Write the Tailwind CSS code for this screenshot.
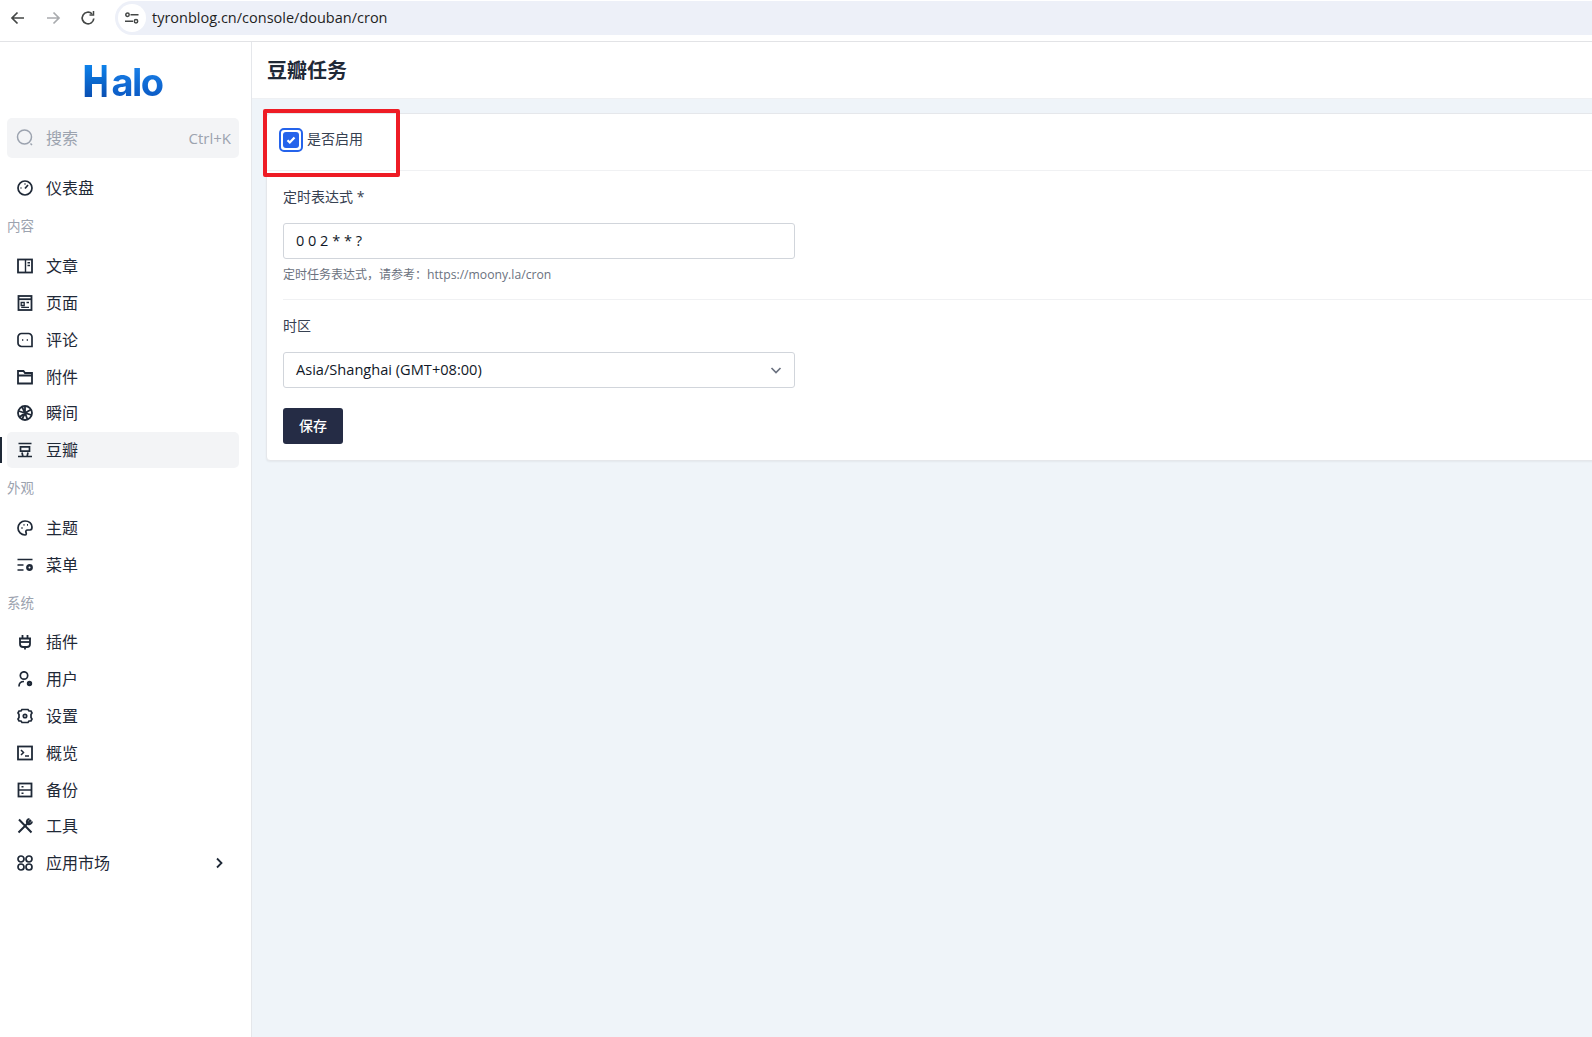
<!DOCTYPE html>
<html lang="zh-CN">
<head>
    <meta charset="UTF-8">
    <title>豆瓣任务</title>
    <script src="https://cdn.jsdelivr.net/npm/@tailwindcss/browser@4"></script>
</head>
<body class="h-[1037px] w-[1592px] overflow-hidden bg-white text-[#1f2937] font-['Open_Sans','Noto_Sans_CJK_SC',sans-serif]">
    <!-- Browser bar -->
    <div class="flex h-[42px] items-start border-b border-[#e2e3e6] bg-white pt-[1px]">
        <div class="flex h-[34px] w-[115px] shrink-0 items-center pl-[9px] gap-[17px]">
            <svg class="h-[18px] w-[18px] text-[#444746]" viewBox="0 0 18 18" fill="none" stroke="currentColor" stroke-width="1.7"><path d="M15 9H3.500M8.500 3.500 3 9l5.500 5.500"/></svg>
            <svg class="h-[18px] w-[18px] text-[#a9abae]" viewBox="0 0 18 18" fill="none" stroke="currentColor" stroke-width="1.7"><path d="M3 9h11.500M9.500 3.500 15 9l-5.500 5.500"/></svg>
            <svg class="h-[18px] w-[18px] text-[#444746]" viewBox="0 0 18 18" fill="none" stroke="currentColor" stroke-width="1.700"><path d="M14.800 9.500A5.800 5.800 0 1 1 13 4.800"/><path d="M14.500 2v4h-4" stroke-width="1.500"/></svg>
        </div>
        <div class="flex h-[34px] flex-1 items-center rounded-l-full bg-[#edf0f8] pl-[3px]">
            <div class="flex h-[28px] w-[28px] items-center justify-center rounded-full bg-white">
                <svg class="h-[16px] w-[16px] text-[#444746]" viewBox="0 0 16 16" fill="none" stroke="currentColor" stroke-width="1.500"><circle cx="3.500" cy="4.800" r="1.700"/><path d="M6.500 4.800h8M1 11.200h8"/><circle cx="12" cy="11.200" r="1.700"/></svg>
            </div>
            <span class="ml-[6px] text-[14.500px] text-[#1f1f1f]">tyronblog.cn/console/douban/cron</span>
        </div>
    </div>

    <div class="flex h-[995px]">
        <!-- Sidebar -->
        <aside class="w-[252px] shrink-0 border-r border-[#e5e7eb] bg-white">
            <div class="flex h-[76px] items-center justify-center pr-[5px] pt-[2px] font-['Inter',sans-serif] leading-none">
                <span class="inline-block w-[28px] origin-left scale-x-[0.84] bg-gradient-to-b from-[#0f8bf5] to-[#0a46a8] bg-clip-text text-[44px] font-black text-transparent">H</span>
                <span class="mt-[1px] self-center bg-gradient-to-b from-[#1c86ee] to-[#0a55c0] bg-clip-text text-[38px] font-bold tracking-[-1.500px] text-transparent">alo</span>
            </div>
            <div class="ml-[7px] mr-[12px] flex h-[40px] items-center rounded-[5px] bg-[#f3f4f6] pl-[8px] pr-[8px] text-[#9ca3af]">
                <svg class="h-[20px] w-[20px] shrink-0" viewBox="0 0 20 20" fill="none" stroke="currentColor" stroke-width="1.500"><circle cx="9.500" cy="9" r="7"/><path d="m15.500 15.500 1.500 1.500"/></svg>
                <span class="ml-[11px] flex-1 text-[16px]">搜索</span>
                <span class="text-[15px]">Ctrl+K</span>
            </div>

            <nav class="mt-[11px] text-[16px] text-[#1f2937]">
                <a class="flex h-[37px] items-center pl-[17px]">
                    <svg class="h-[16px] w-[16px]" viewBox="0 0 16 16" fill="none" stroke="currentColor" stroke-width="1.700"><circle cx="8" cy="8" r="7"/><path d="m8 8.500 3-3.500M3.500 8h1M8 3.500v1"/></svg>
                    <span class="ml-[13px]">仪表盘</span>
                </a>
                <div class="flex h-[41px] items-center pl-[7px] text-[13.500px] text-[#9ca3af]">内容</div>
                <a class="flex h-[38px] items-center pl-[17px]">
                    <svg class="h-[16px] w-[16px]" viewBox="0 0 16 16" fill="none" stroke="currentColor" stroke-width="1.800"><rect x="1" y="1.500" width="14" height="13"/><path d="M8.500 1.500v13M10.500 4.800h2.500M10.500 7.500h2.500" stroke-width="1.400"/></svg>
                    <span class="ml-[13px]">文章</span>
                </a>
                <a class="flex h-[36.700px] items-center pl-[17px]">
                    <svg class="h-[16px] w-[16px]" viewBox="0 0 16 16" fill="none" stroke="currentColor" stroke-width="1.800"><rect x="1.500" y="1" width="13" height="14"/><path d="M1.500 4.200h13"/><path d="M4.200 7.500h3v3h-3zM9.500 7.500h2.500M4.200 12.300h7.800" stroke-width="1.300"/></svg>
                    <span class="ml-[13px]">页面</span>
                </a>
                <a class="flex h-[36.700px] items-center pl-[17px]">
                    <svg class="h-[16px] w-[16px]" viewBox="0 0 16 16" fill="none" stroke="currentColor" stroke-width="1.700"><path d="M4.500 1.500h7a3.500 3.500 0 0 1 3.500 3.500v9.500H4.500A3.500 3.500 0 0 1 1 11V5a3.500 3.500 0 0 1 3.500-3.500z"/><path d="M5 8h1.300M9.700 8H11"/></svg>
                    <span class="ml-[13px]">评论</span>
                </a>
                <a class="flex h-[36.700px] items-center pl-[17px]">
                    <svg class="h-[16px] w-[16px]" viewBox="0 0 16 16" fill="none" stroke="currentColor" stroke-width="1.800"><path d="M1 2h5.500l1.500 2h7v10.500H1zM1 6.500h14"/></svg>
                    <span class="ml-[13px]">附件</span>
                </a>
                <a class="flex h-[36.700px] items-center pl-[17px]">
                    <svg class="h-[16px] w-[16px]" viewBox="0 0 16 16" fill="none" stroke="currentColor" stroke-width="1.800"><circle cx="8" cy="8" r="7"/><path d="M5 1.800 8 8l6-3.500M1.500 6 8 8l-3 6.500M14.500 10 8 8l2.500 6.500M8 8l-6 4.500M8 8V1"/></svg>
                    <span class="ml-[13px]">瞬间</span>
                </a>
                <div class="relative">
                    <div class="absolute left-0 top-[5px] h-[26px] w-[2px] bg-[#1f2937]"></div>
                    <a class="ml-[7px] mr-[12px] flex h-[36px] items-center rounded-[5px] bg-[#f3f4f6] pl-[10px]">
                        <svg class="h-[16px] w-[16px]" viewBox="0 0 16 16" fill="none" stroke="currentColor" stroke-width="1.700"><path d="M1.500 1.500h13M3.500 4.800h9v4.400h-9zM5 10.500l.8 3.500M11 10.500l-.8 3.500M1 14.500h14"/></svg>
                        <span class="ml-[13px]">豆瓣</span>
                    </a>
                </div>
                <div class="flex h-[42px] items-center pb-[2px] pl-[7px] text-[13.500px] text-[#9ca3af]">外观</div>
                <a class="flex h-[37px] items-center pl-[17px]">
                    <svg class="h-[16px] w-[16px]" viewBox="0 0 16 16" fill="none" stroke="currentColor" stroke-width="1.700"><path d="M8 1a7 7 0 0 0 0 14c1.500 0 1.500-1.500 1-2.500S9 10 10.500 10H13c1.500 0 2-1.500 2-3 0-3.500-3-6-7-6z"/><path d="M4.500 8h1M6.500 4.800h1M10 4.800h1" stroke-width="1.800"/></svg>
                    <span class="ml-[13px]">主题</span>
                </a>
                <a class="flex h-[36.700px] items-center pl-[17px]">
                    <svg class="h-[16px] w-[16px]" viewBox="0 0 16 16" fill="none" stroke="currentColor" stroke-width="1.700"><path d="M0.500 2.500h15M0.500 8h6M0.500 13h6"/><circle cx="12.500" cy="10.500" r="2.200" stroke-width="2.400"/></svg>
                    <span class="ml-[13px]">菜单</span>
                </a>
                <div class="flex h-[40px] items-center pl-[7px] text-[13.500px] text-[#9ca3af]">系统</div>
                <a class="flex h-[37px] items-center pl-[17px]">
                    <svg class="h-[16px] w-[16px]" viewBox="0 0 16 16" fill="none" stroke="currentColor" stroke-width="1.800"><path d="M5.500 1v3M10.500 1v3M2 4.500h12M3 4.500v5.500a3 3 0 0 0 3 3h4a3 3 0 0 0 3-3V4.500M8 13v2.500"/><path d="M3 8h10"/></svg>
                    <span class="ml-[13px]">插件</span>
                </a>
                <a class="flex h-[37.500px] items-center pl-[17px]">
                    <svg class="h-[16px] w-[16px]" viewBox="0 0 16 16" fill="none" stroke="currentColor" stroke-width="1.700"><circle cx="7" cy="4.500" r="3.700"/><path d="M2 15.500c0-3 2-5 5-5"/><circle cx="12.500" cy="12.500" r="1.500" stroke-width="2.400"/></svg>
                    <span class="ml-[13px]">用户</span>
                </a>
                <a class="flex h-[36.700px] items-center pl-[17px]">
                    <svg class="h-[16px] w-[16px]" viewBox="0 0 16 16" fill="none" stroke="currentColor" stroke-width="1.700"><path d="M5 1.500 4 3H2L1 5l1 1.500v3L1 11l1 2h2l1 1.500h6l1-1.500h2l1-2-1-1.500v-3L15 5l-1-2h-2l-1-1.500z"/><circle cx="8" cy="8" r="1.700"/></svg>
                    <span class="ml-[13px]">设置</span>
                </a>
                <a class="flex h-[36.700px] items-center pl-[17px]">
                    <svg class="h-[16px] w-[16px]" viewBox="0 0 16 16" fill="none" stroke="currentColor" stroke-width="1.800"><rect x="1" y="1.500" width="14" height="13"/><path d="m4 5 2.500 2.500L4 10M8 11h4" stroke-width="1.500"/></svg>
                    <span class="ml-[13px]">概览</span>
                </a>
                <a class="flex h-[36.700px] items-center pl-[17px]">
                    <svg class="h-[16px] w-[16px]" viewBox="0 0 16 16" fill="none" stroke="currentColor" stroke-width="1.800"><rect x="1.500" y="1.500" width="13" height="13"/><path d="M1.500 8h13M4.500 4.800h2M4.500 11.200h2" stroke-width="1.500"/></svg>
                    <span class="ml-[13px]">备份</span>
                </a>
                <a class="flex h-[36.700px] items-center pl-[17px]">
                    <svg class="h-[16px] w-[16px]" viewBox="0 0 16 16" fill="none" stroke="currentColor" stroke-width="2"><path d="M2 1.500 14.500 14.500M14 2 1.500 14.500M12.500 1a3 3 0 0 0-2.500 4M15 3.500a3 3 0 0 1-4 2.500"/></svg>
                    <span class="ml-[13px]">工具</span>
                </a>
                <a class="flex h-[36.700px] items-center pl-[17px]">
                    <svg class="h-[16px] w-[16px]" viewBox="0 0 16 16" fill="none" stroke="currentColor" stroke-width="1.700"><circle cx="4" cy="4" r="3"/><circle cx="12" cy="4" r="3"/><circle cx="4" cy="12" r="3"/><circle cx="12" cy="12" r="3"/></svg>
                    <span class="ml-[13px] flex-1">应用市场</span>
                    <svg class="mr-[26px] h-[12px] w-[12px]" viewBox="0 0 12 12" fill="none" stroke="currentColor" stroke-width="1.800"><path d="m4 1.500 4.500 4.500L4 10.500"/></svg>
                </a>
            </nav>
        </aside>

        <!-- Main -->
        <main class="relative flex-1 overflow-hidden bg-[#eff4f9]">
            <header class="flex h-[57px] items-center border-b border-[#eef0f3] bg-white pl-[15px] pt-[2px]">
                <h1 class="text-[20px] font-bold leading-none text-[#1f2937]">豆瓣任务</h1>
            </header>
            <div class="ml-[14px] mr-[-20px] mt-[14px] h-[348px] rounded-[4px] border border-[#e5e7eb] bg-white shadow-xs">
                <div class="flex h-[57px] items-start border-b border-[#f0f1f3] pl-[12px] pt-[14px]">
                    <label class="flex items-center text-[14px] text-[#374151]">
                        <span class="flex h-[24px] w-[24px] items-center justify-center rounded-[5px] border-2 border-[#2563eb] bg-white">
                            <span class="flex h-[16px] w-[16px] items-center justify-center rounded-[3px] bg-[#2563eb]">
                                <svg class="h-[10px] w-[10px] text-white" viewBox="0 0 10 10" fill="none" stroke="currentColor" stroke-width="2.200"><path d="m1.500 5.200 2.300 2.300 4.700-5"/></svg>
                            </span>
                        </span>
                        <span class="-mt-[3px] ml-[4px]">是否启用</span>
                    </label>
                </div>
                <div class="mx-[16px] h-[129px] border-b border-[#f0f1f3] pt-[15px]">
                    <label class="block text-[14px] leading-[22px] text-[#374151]">定时表达式 *</label>
                    <div class="mt-[15px] flex h-[36px] w-[512px] items-center rounded-[3px] border border-[#d1d5db] pl-[12px] text-[14.500px] text-[#111827]">0 0 2 * * ?</div>
                    <p class="mt-[7px] text-[12px] leading-[18px] text-[#6b7280]">定时任务表达式，请参考：<span class="text-[12.200px]">https://moony.la/cron</span></p>
                </div>
                <div class="mx-[16px] pt-[15px]">
                    <label class="block text-[14px] leading-[22px] text-[#374151]">时区</label>
                    <div class="mt-[15px] flex h-[36px] w-[512px] items-center justify-between rounded-[3px] border border-[#d1d5db] pl-[12px] pr-[12px] text-[14.600px] text-[#111827]">
                        <span>Asia/Shanghai (GMT+08:00)</span>
                        <svg class="h-[12px] w-[12px] text-[#6b7280]" viewBox="0 0 12 12" fill="none" stroke="currentColor" stroke-width="1.700"><path d="M1.500 4 6 8.500 10.500 4"/></svg>
                    </div>
                    <button class="mt-[20px] flex h-[36px] w-[60px] items-center justify-center rounded-[3px] bg-[#252c45] pb-[2px] text-[14px] font-medium text-white">保存</button>
                </div>
            </div>
            <!-- red annotation box -->
            <div class="absolute left-[11px] top-[67px] h-[68px] w-[137px] rounded-[2px] border-[4px] border-[#ee1c25]"></div>
        </main>
    </div>
</body>
</html>
